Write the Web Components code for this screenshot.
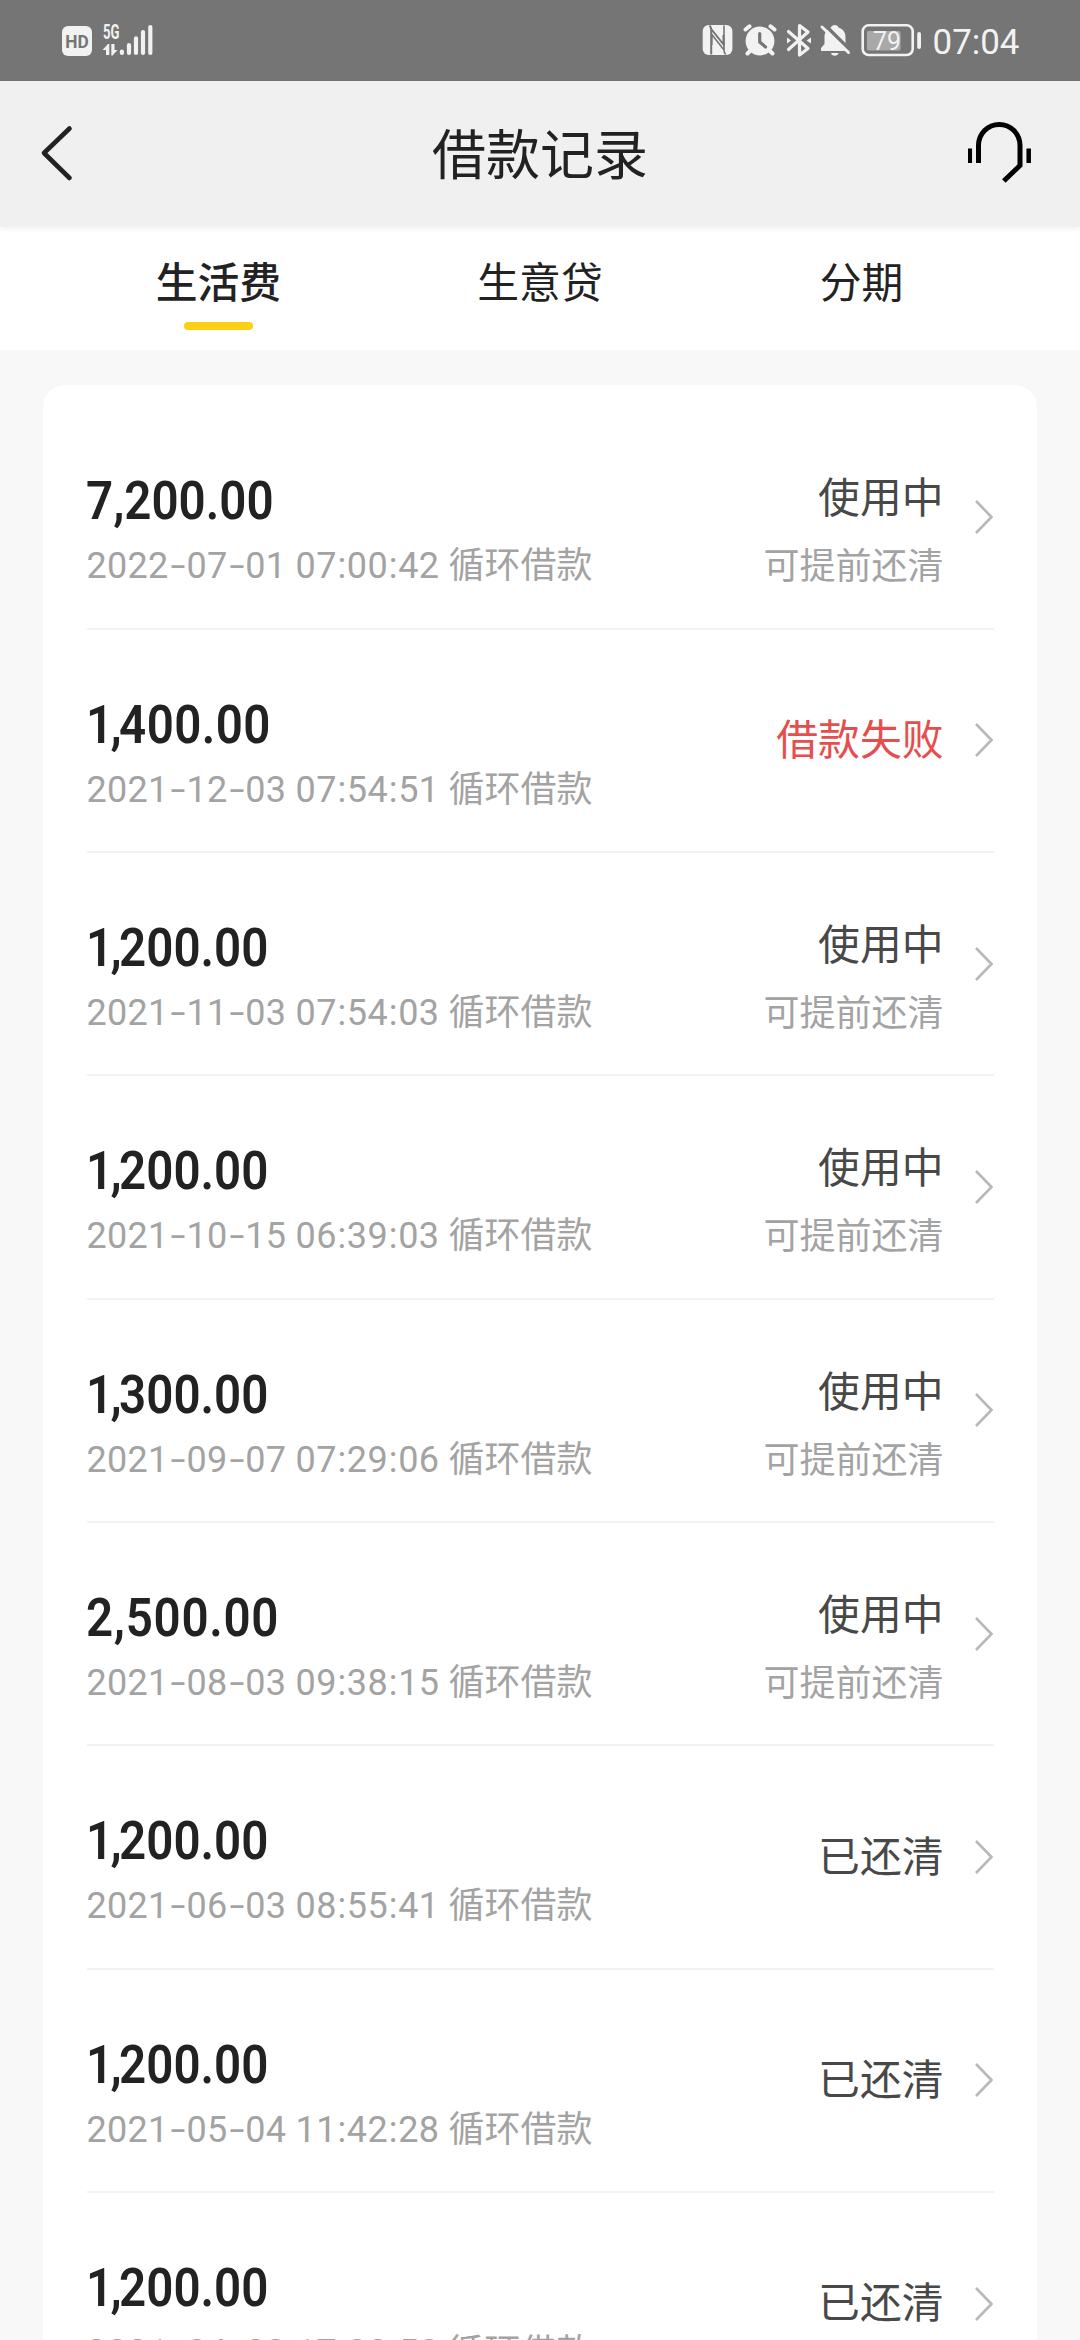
<!DOCTYPE html>
<html lang="zh-CN">
<head>
<meta charset="utf-8">
<title>借款记录</title>
<style>
html,body{margin:0;padding:0}
body{width:1080px;height:2340px;overflow:hidden;background:#f8f8f8;color:#222;font-family:Roboto,"Noto Sans CJK SC",sans-serif}
</style>
</head>
<body>
<loan-app></loan-app>
<script>
const define = (name, html, setup) => {
  const t = document.createElement('template');
  t.innerHTML = html;
  customElements.define(name, class extends HTMLElement {
    connectedCallback() {
      if (this.shadowRoot) return;
      this.attachShadow({mode: 'open'}).appendChild(t.content.cloneNode(true));
      if (setup) setup(this, this.shadowRoot);
    }
  });
};

define('status-bar', `
<style>
:host{display:flex;height:81px;background:#757575;color:#f2f2f2}
svg{display:block;font-family:Roboto,sans-serif}
</style>
<svg width="1080" height="81" viewBox="0 0 1080 81" fill="#f2f2f2">
  <rect x="62" y="26" width="30" height="30" rx="6"/>
  <text x="65.3" y="47.8" font-size="19" font-weight="700" fill="#757575" textLength="23.5" lengthAdjust="spacingAndGlyphs">HD</text>
  <text x="103" y="38.5" font-size="19.5" font-weight="700" textLength="16.5" lengthAdjust="spacingAndGlyphs">5G</text>
  <path d="M102.500 50L108 44H109.300V55H106V50ZM111.300 44H114.500V50H117.500L112.600 55.500H111.300Z"/>
  <g stroke="#f2f2f2" stroke-width="4.200" stroke-linecap="round"><path d="M121.900 51.600V53M129 45V53M136 38.300V53M143 32V53M150.300 27V53"/></g>
  <rect x="702.700" y="25" width="29.700" height="30" rx="6"/>
  <g fill="none" stroke="#757575" stroke-width="2"><path d="M709.500 25.500Q711.200 27 711.200 30V54.500M711.200 29L723.500 44.500V35"/><path d="M725.700 54.500Q724 53 724 50L711.800 34.500V45M724 50V25.500" stroke-width="1.600"/></g>
  <circle cx="760" cy="41" r="14.400"/>
  <path d="M745.500 29.500L749.500 26.300M774.500 29.500L770.500 26.300M747.500 53.500L751 50M772.500 53.500L769 50" stroke="#f2f2f2" stroke-width="4" stroke-linecap="round"/>
  <path d="M759.700 33.500V42L765.500 47" fill="none" stroke="#757575" stroke-width="3.200" stroke-linecap="round" stroke-linejoin="round"/>
  <path d="M788.500 31.500L808 48.500L799.500 55V25.500L808 32L788.500 49.500" fill="none" stroke="#f2f2f2" stroke-width="3.200" stroke-linecap="round" stroke-linejoin="round"/>
  <path d="M787 37.500L791 40.500L787 43.500ZM811 37.500L806.500 40.500L811 43.500Z"/>
  <path d="M821 51V48L824.500 44V36C825 31 828 29 831 27.500C831.500 24 838 24 838.500 27.500C843 29 845.500 32 845.500 37V44L849 48V51ZM831 53H838.500C838 56.500 831.500 56.500 831 53Z"/>
  <path d="M824 24L851 51" stroke="#757575" stroke-width="3.500"/>
  <path d="M822 27L848.500 52.500" stroke="#f2f2f2" stroke-width="3" stroke-linecap="round"/>
  <rect x="862.700" y="25.300" width="50" height="29.700" rx="6" fill="none" stroke="#f2f2f2" stroke-width="2.600"/>
  <rect x="867" y="31" width="33.500" height="19.500" rx="1.500" fill="#a9a9a9"/>
  <rect x="917.200" y="32" width="3.800" height="17" rx="1.900"/>
  <text x="873" y="50" font-size="26" font-weight="400" textLength="28" lengthAdjust="spacingAndGlyphs">79</text>
  <text x="932.500" y="54" font-size="35" textLength="87" lengthAdjust="spacingAndGlyphs">07:04</text>
</svg>`);

define('title-bar', `
<style>
:host{display:flex;align-items:center;justify-content:space-between;box-sizing:border-box;height:146px;padding:0 40px;background:#f0f0f0;box-shadow:0 2px 6px rgba(0,0,0,.06);position:relative}
svg{display:block}
.side{width:72px}
h1{margin:6px 0 0;font-weight:400;font-size:54px;line-height:78px}
</style>
<div class="side"><svg width="36" height="60" viewBox="0 0 36 60"><path d="M29.500 4.500L4 29L29.500 54" fill="none" stroke="#222" stroke-width="4.600" stroke-linecap="round" stroke-linejoin="round"/></svg></div>
<h1><slot></slot></h1>
<div class="side"><svg width="72" height="72" viewBox="0 0 72 72"><g transform="translate(-968 -118)" fill="none" stroke="#000" stroke-width="5"><path d="M978.500 163V145.500A20.700 21 0 0 1 1020 145.500V165.500L1003.800 181"/><path d="M969.800 148.500V163M1028.700 148.500V163" stroke-width="4.500"/></g></svg></div>`);

define('tab-item', `
<style>
:host{flex:1;display:flex;flex-direction:column;align-items:center;font-size:41.800px}
span{line-height:62px}
i{display:block;width:69px;height:8px;border-radius:4px;margin-top:7px}
:host([active]){font-weight:500}
:host([active]) i{background:#f9d012}
</style><span><slot></slot></span><i></i>`);

define('tab-bar', `
<style>:host{display:flex;box-sizing:border-box;height:123px;padding:26px 57.600px 0;background:#fff}</style><slot></slot>`);

define('loan-card', `
<style>:host{display:block;margin:35px 43px 0;padding:21.200px 43.500px 0;background:#fff;border-radius:22px}</style><slot></slot>`);

define('loan-row', `
<style>
:host{display:flex;box-sizing:border-box;height:223.360px;border-bottom:2px solid #f2f2f2}
.left,.right{display:flex;flex-direction:column;padding-top:61px}
.left{flex:1;align-items:flex-start}
.right{align-items:flex-end;color:#484848}
:host([single]) .right{padding-top:0;justify-content:center}
:host([failed]) .right{color:#e64e4e}
.amount{font-weight:600;font-size:54.500px;line-height:66px;transform:scaleX(.872);transform-origin:0 50%;white-space:nowrap;margin-left:-1px}
.amount.one{margin-left:-.5px}
.one::first-letter{letter-spacing:-3px}
.one.wide{letter-spacing:.5px}
.amount.two{letter-spacing:.8px}
.meta,.note{font-size:36px;line-height:50px;margin-top:8px;color:#a3a3a3;white-space:nowrap}
.note{margin-top:10px}
.meta{letter-spacing:.3px}
.meta b{display:inline-block;font-weight:400;width:17.800px;text-align:center;letter-spacing:0;transform:scaleX(1.500)}
.meta u{display:inline-block;text-decoration:none;width:10.200px;text-align:center;letter-spacing:0}
.meta em{font-style:normal;letter-spacing:0;margin-left:0}
.state{font-size:41.800px;line-height:66px;margin-top:-1px}
:host([single]) .state{margin:1px 0 0}
svg{align-self:center;margin-left:30px;display:block}
</style>
<div class="left"><div class="amount"></div><div class="meta"></div></div>
<div class="right"><div class="state"></div></div>
<svg width="20" height="36" viewBox="0 0 20 36"><path d="M2 2L17.500 18L2 34" fill="none" stroke="#b8b8b8" stroke-width="2.600"/></svg>`,
(el, root) => {
  const amount = el.getAttribute('amount');
  const box = root.querySelector('.amount');
  box.textContent = amount;
  box.classList.toggle('one', amount[0] === '1');
  box.classList.toggle('two', amount[0] === '2');
  box.classList.toggle('wide', amount.startsWith('1,4'));
  root.querySelector('.meta').innerHTML = el.getAttribute('time').replace(/-/g, '<b>-</b>').replace(/:/g, '<u>:</u>') + ' <em>循环借款</em>';
  root.querySelector('.state').textContent = el.getAttribute('state');
  const note = el.getAttribute('note');
  if (note) {
    const n = document.createElement('div');
    n.className = 'note';
    n.textContent = note;
    root.querySelector('.right').append(n);
  } else el.toggleAttribute('single', true);
});

define('loan-app', `
<style>:host{display:flex;flex-direction:column}</style>
<status-bar></status-bar>
<title-bar>借款记录</title-bar>
<tab-bar><tab-item active>生活费</tab-item><tab-item>生意贷</tab-item><tab-item>分期</tab-item></tab-bar>
<loan-card>
<loan-row amount="7,200.00" time="2022-07-01 07:00:42" state="使用中" note="可提前还清"></loan-row>
<loan-row amount="1,400.00" time="2021-12-03 07:54:51" state="借款失败" failed></loan-row>
<loan-row amount="1,200.00" time="2021-11-03 07:54:03" state="使用中" note="可提前还清"></loan-row>
<loan-row amount="1,200.00" time="2021-10-15 06:39:03" state="使用中" note="可提前还清"></loan-row>
<loan-row amount="1,300.00" time="2021-09-07 07:29:06" state="使用中" note="可提前还清"></loan-row>
<loan-row amount="2,500.00" time="2021-08-03 09:38:15" state="使用中" note="可提前还清"></loan-row>
<loan-row amount="1,200.00" time="2021-06-03 08:55:41" state="已还清"></loan-row>
<loan-row amount="1,200.00" time="2021-05-04 11:42:28" state="已还清"></loan-row>
<loan-row amount="1,200.00" time="2021-04-02 17:00:50" state="已还清"></loan-row>
</loan-card>`);
</script>
</body>
</html>
